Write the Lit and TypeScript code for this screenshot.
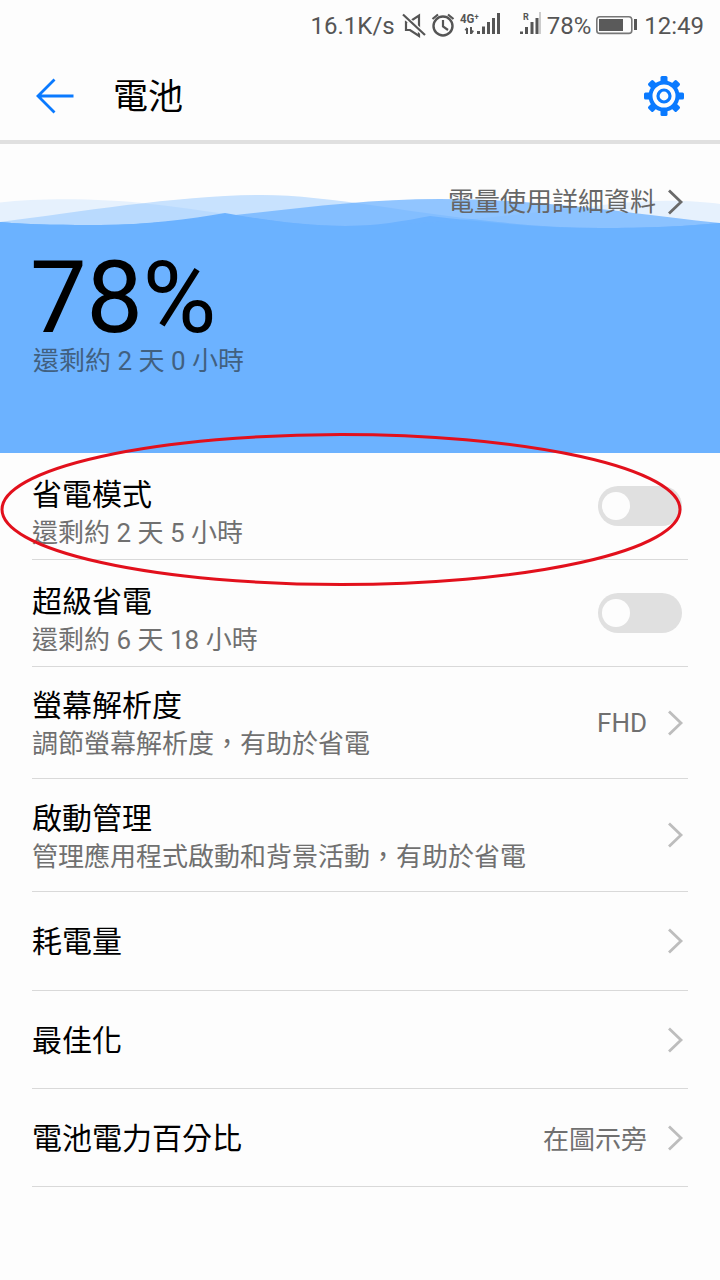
import { LitElement, html, css, svg } from "lit";
import { customElement } from "lit/decorators.js";

const chevron = (dark = false) => html`<svg class="chev" width="18" height="28" viewBox="0 0 18 28"><path d="M3 2.5 L15 14 L3 25.5" fill="none" stroke=${dark ? "#6a6a6a" : "#bdbdbd"} stroke-width="2.8"/></svg>`;

const WAVE_A = "M0 202.5 C40 198 100 198 150 204 C220 211 280 226 345 226 C430 226 540 212 620 203 C660 199 700 201 720 204 V240 H0Z";
const WAVE_B = "M0 222 C80 212 180 195 262 195 C350 195 470 228 600 228 C650 228 690 226 720 223 V240 H0Z";
const WAVE_C = "M0 222 C30 225 70 225 100 225 C200 225 320 199 440 199 C550 199 640 215 720 223 V240 H0Z";

@customElement("app-root")
export class AppRoot extends LitElement {
  static styles = css`
    :host { display: block; width: 720px; height: 1280px; position: relative; overflow: hidden; background: #fdfdfd; font-family: Roboto, "Noto Sans CJK TC", sans-serif; color: #000; }
    .status { height: 50px; box-sizing: border-box; padding: 2px 16px 0 0; display: flex; align-items: center; justify-content: flex-end; font-size: 24px; color: #555; gap: 4px; }
    .status svg { display: block; }
    .pct { margin-left: 2px; }
    .toolbar { height: 90px; display: flex; align-items: center; padding: 2px 35px 0 36px; box-sizing: border-box; }
    .toolbar h1 { font-size: 35px; font-weight: 400; margin: 2px 0 0 39px; flex: 1; line-height: 1; }
    .rule { height: 4px; background: #e0e0e0; }
    .hero { height: 309px; position: relative; box-sizing: border-box; padding: 40px 32px 0 33px; }
    .waves { position: absolute; left: 0; top: 0; width: 720px; height: 309px; }
    .link { position: relative; display: flex; justify-content: flex-end; align-items: center; gap: 10px; font-size: 26px; color: #666; line-height: 36px; }
    .big { position: relative; font-size: 101px; line-height: 90px; margin-top: 33px; margin-left: -3px; letter-spacing: -0.5px; }
    .remain { position: relative; font-size: 26px; color: #41607f; line-height: 36px; }
    .row { margin-left: 32px; margin-right: 32px; display: flex; align-items: center; border-bottom: 1px solid #d9d9d9; box-sizing: border-box; }
    .grow { flex: 1; min-width: 0; padding-top: 3px; }
    .tall { padding-top: 14px; }
    .single { padding-top: 2px; }
    .t { font-size: 30px; line-height: 40px; }
    .s { font-size: 26px; line-height: 36px; color: #707070; }
    .v { font-size: 26px; color: #707070; margin-right: 19px; }
    .chev { margin-right: 4px; }
    .sw { width: 84px; height: 40px; border-radius: 20px; background: #e0e0e0; padding: 6px 4px; box-sizing: border-box; margin-right: 6px; }
    .sw i { display: block; width: 28px; height: 28px; border-radius: 50%; background: #fdfdfd; }
    .ring { position: absolute; left: 0; top: 430px; pointer-events: none; }
    .badge { font-family: Roboto, sans-serif; font-weight: 700; fill: #555; }
  `;

  private row(h: number, t: string, s?: string, right?: unknown, tall = false) {
    const cls = tall ? "tall" : s ? "" : "single";
    return html`<div class="row" style="height:${h}px">
      <div class="grow ${cls}"><div class="t">${t}</div>${s ? html`<div class="s">${s}</div>` : ""}</div>
      ${right}
    </div>`;
  }

  render() {
    const sw = html`<div class="sw"><i></i></div>`;
    return html`
      <div class="status">
        <span>16.1K/s</span>
        <svg width="28" height="28" viewBox="0 0 28 28"><path d="M7 9.5H11L20 3.5V24L11 18H7Z" fill="none" stroke="#555" stroke-width="2.2"/><path d="M4 3L26 23" stroke="#fdfdfd" stroke-width="5"/><path d="M4 2.5L26 23" stroke="#555" stroke-width="2.2"/></svg>
        <svg width="24" height="28" viewBox="0 0 24 28"><circle cx="12" cy="14" r="9.5" fill="none" stroke="#555" stroke-width="2.4"/><path d="M12 8V14.5L17 18M1.5 7L7 2.5M22.5 7L17 2.5" fill="none" stroke="#555" stroke-width="2.2"/></svg>
        <svg width="42" height="28" viewBox="0 0 42 28" fill="#555"><text class="badge" x="1" y="10.5" font-size="12.5" textLength="19" lengthAdjust="spacingAndGlyphs">4G⁺</text><path d="M7 16h2v6H7zM5.5 18l2.5-3v4zM11 15h2v7h-2zM15 19l-2 3v-4z"/><rect x="18" y="19" width="3" height="3"/><rect x="23" y="14.5" width="3" height="7.5"/><rect x="28" y="10" width="3" height="12"/><rect x="33" y="6" width="3" height="16"/><rect x="38" y="1" width="3" height="21"/></svg>
        <svg width="36" height="28" viewBox="0 0 36 28" fill="#555"><text class="badge" x="18" y="7.5" font-size="9">R</text><rect x="15" y="19.5" width="3" height="2.5"/><rect x="20" y="15" width="3" height="7"/><rect x="25.5" y="10" width="3" height="12"/><rect x="30.5" y="6" width="3" height="16"/><rect x="34" y="0" width="2" height="22" fill="#ccc"/></svg>
        <span class="pct">78%</span>
        <svg width="45" height="28" viewBox="0 0 45 28"><rect x="1.8" y="4.8" width="35" height="16.6" rx="3" fill="none" stroke="#777" stroke-width="1.6"/><rect x="4" y="7" width="24" height="12" fill="#5a5a5a"/><rect x="39" y="7" width="3" height="11" fill="#555"/></svg>
        <span>12:49</span>
      </div>
      <div class="toolbar">
        <svg width="38" height="36" viewBox="0 0 38 36"><path d="M18.5 1.5 L2 18 L18.5 34.5 M2 18 H37.5" fill="none" stroke="#0a7aff" stroke-width="2.8"/></svg>
        <h1>電池</h1>
        <svg width="42" height="42" viewBox="0 0 42 42">
          <g fill="#0a7aff">${[0, 45, 90, 135, 180, 225, 270, 315].map((a) => svg`<rect x="17.5" y="1" width="7" height="7" rx="1.5" transform="rotate(${a} 21 21)"/>`)}</g>
          <circle cx="21" cy="21" r="13.5" fill="none" stroke="#0a7aff" stroke-width="4"/>
          <circle cx="21" cy="21" r="6" fill="none" stroke="#0a7aff" stroke-width="3.2"/>
        </svg>
      </div>
      <div class="rule"></div>
      <div class="hero">
        <svg class="waves" viewBox="0 144 720 309">
          <defs>
            <clipPath id="ca"><path d=${WAVE_A}/></clipPath>
            <clipPath id="cb" clip-path="url(#ca)"><path d=${WAVE_B}/></clipPath>
          </defs>
          <path d="M0 222 C30 225 70 225 100 225 C145 225 190 219 225 213 C265 220 305 226 345 226 C375 226 405 221 430 216 C480 222 540 228 600 228 C645 228 690 226 720 223 V453 H0Z" fill="#6cb2ff"/>
          <path d=${WAVE_A} fill="#6cb2ff" opacity=".155"/>
          <path d=${WAVE_B} fill="#6cb2ff" opacity=".37"/>
          <path d=${WAVE_C} fill="#6cb2ff" opacity=".75"/>
          <path d=${WAVE_C} clip-path="url(#cb)" fill="#6cb2ff" opacity=".55"/>
        </svg>
        <div class="link"><span>電量使用詳細資料</span>${chevron(true)}</div>
        <div class="big">78%</div>
        <div class="remain">還剩約 2 天 0 小時</div>
      </div>
      ${this.row(107, "省電模式", "還剩約 2 天 5 小時", sw, true)}
      ${this.row(107, "超級省電", "還剩約 6 天 18 小時", sw, true)}
      ${this.row(112, "螢幕解析度", "調節螢幕解析度\uFF0C有助於省電", html`<span class="v">FHD</span>${chevron()}`)}
      ${this.row(113, "啟動管理", "管理應用程式啟動和背景活動\uFF0C有助於省電", chevron())}
      ${this.row(99, "耗電量", "", chevron())}
      ${this.row(98, "最佳化", "", chevron())}
      ${this.row(98, "電池電力百分比", "", html`<span class="v">在圖示旁</span>${chevron()}`)}
      <svg class="ring" width="720" height="170" viewBox="0 430 720 170"><ellipse cx="341" cy="509.5" rx="339" ry="75" fill="none" stroke="#e2101c" stroke-width="3"/></svg>
    `;
  }
}
